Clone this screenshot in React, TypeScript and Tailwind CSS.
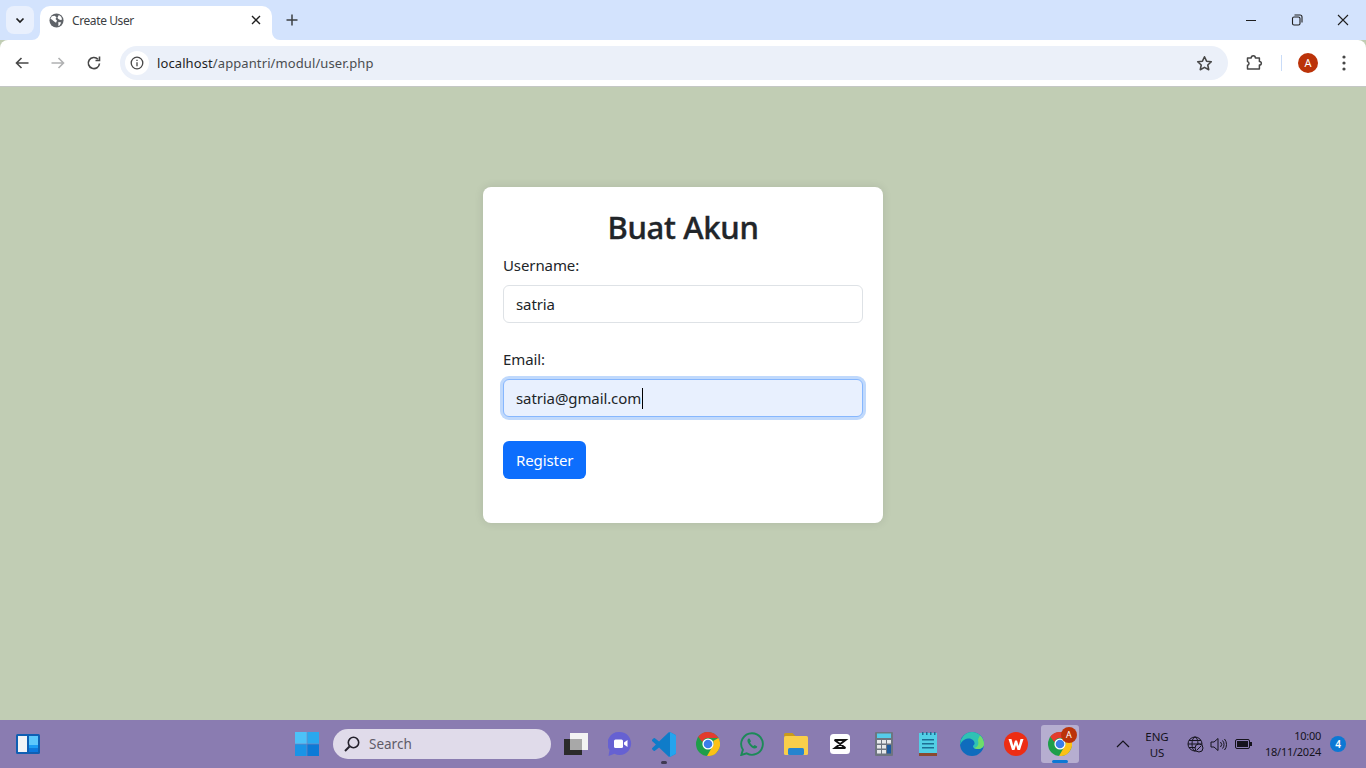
import React from "react";

const font = { fontFamily: '"Noto Sans", "Open Sans", sans-serif' };

function ChromeLogo({ size = 24 }: { size?: number }) {
  return (
    <svg width={size} height={size} viewBox="0 0 24 24">
      <circle cx="12" cy="12" r="12" fill="#1e9e4a" />
      <path d="M12 0a12 12 0 0 1 10.400 6H12a6 6 0 0 0-5.600 3.900L2.200 4.700A12 12 0 0 1 12 0z" fill="#e33b2e" />
      <path d="M22.400 6A12 12 0 0 1 11 24l5-8.700A6 6 0 0 0 17.200 9z" fill="#fbc116" />
      <circle cx="12" cy="12" r="5.600" fill="#fff" />
      <circle cx="12" cy="12" r="4.300" fill="#3a7de8" />
    </svg>
  );
}

function TaskItem({ children, dot }: { children: React.ReactNode; dot?: boolean }) {
  return (
    <div className="relative flex h-[38px] w-11 items-center justify-center">
      {children}
      {dot && <div className="absolute bottom-[-1px] left-[19px] h-[3px] w-[6px] rounded-full bg-[#3f3a52]" />}
    </div>
  );
}

export default function App() {
  return (
    <div className="flex h-screen w-full flex-col overflow-hidden bg-[#c1cdb4]" style={font}>
      {/* Tab strip */}
      <div className="flex h-10 shrink-0 items-end bg-[#d3e3fd]">
        <div className="mb-[6px] ml-[6px] flex h-7 w-7 items-center justify-center rounded-lg bg-[#e9f0fd]">
          <svg width="12" height="12" viewBox="0 0 12 12" fill="none" stroke="#1f1f1f" strokeWidth="1.700">
            <path d="M2.500 4.500 6 8l3.500-3.500" />
          </svg>
        </div>
        <div className="relative ml-[6px] flex h-[34px] w-[232px] items-center rounded-t-[10px] bg-white pb-[6px] pl-[9px] pr-[10px]">
          <svg className="absolute bottom-0 left-[-8px]" width="8" height="8" viewBox="0 0 8 8"><path d="M8 0v8H0a8 8 0 0 0 8-8z" fill="#fff" /></svg>
          <svg className="absolute bottom-0 right-[-8px]" width="8" height="8" viewBox="0 0 8 8"><path d="M0 0v8h8a8 8 0 0 1-8-8z" fill="#fff" /></svg>
          <svg width="15" height="15" viewBox="0 0 16 16">
            <circle cx="8" cy="8" r="7.500" fill="#5f6368" />
            <path d="M3 3.500 6 3l2 1.500L7 6.500 8.500 8l-1 2.500L5.500 9 3 7 1.500 6zM10.500 2l2.500 2 1 3-2 .5-2-1-1-1.500zM10 9.500l3 .5-1.500 3L10 14z" fill="#fff" />
          </svg>
          <span className="ml-[8px] flex-1 pt-[2px] text-[12px] leading-none tracking-[-0.4px] text-[#3c4043]">Create User</span>
          <svg width="10" height="10" viewBox="0 0 10 10" stroke="#1f1f1f" strokeWidth="1.400" className="mr-[1px]">
            <path d="M1 1l8 8M9 1 1 9" />
          </svg>
        </div>
        <div className="mb-[14px] ml-[14px] flex h-3 w-3 items-center justify-center">
          <svg width="12" height="12" viewBox="0 0 12 12" stroke="#3c4043" strokeWidth="1.500"><path d="M6 .5v11M.5 6h11" /></svg>
        </div>
        <div className="mb-[14px] ml-auto flex items-center">
          <div className="flex w-[46px] justify-center">
            <svg width="12" height="12" viewBox="0 0 12 12" stroke="#1f1f1f"><path d="M1 6.500h10" /></svg>
          </div>
          <div className="flex w-[46px] justify-center">
            <svg width="12" height="12" viewBox="0 0 12 12" fill="none" stroke="#1f1f1f" strokeWidth="1.100">
              <rect x="1.500" y="3" width="7.500" height="8" rx="1.500" />
              <path d="M3.500 1h5.500a2 2 0 0 1 2 2v5.500" />
            </svg>
          </div>
          <div className="flex w-[46px] justify-center">
            <svg width="12" height="12" viewBox="0 0 12 12" stroke="#1f1f1f" strokeWidth="1.100"><path d="M1 1l10 10M11 1 1 11" /></svg>
          </div>
        </div>
      </div>

      {/* Toolbar */}
      <div className="flex h-[47px] shrink-0 items-center rounded-t-lg border-b border-[#c4c7c5] bg-white">
        <div className="ml-[14px] flex items-center gap-[20px]">
          <svg width="16" height="16" viewBox="0 0 16 16" fill="none" stroke="#474747" strokeWidth="1.600"><path d="M14.500 8H2.500M7.500 3l-5 5 5 5" /></svg>
          <svg width="16" height="16" viewBox="0 0 16 16" fill="none" stroke="#b0b1b2" strokeWidth="1.600"><path d="M1.500 8h12M8.500 3l5 5-5 5" /></svg>
          <svg width="16" height="16" viewBox="0 0 16 16" fill="none" stroke="#474747" strokeWidth="1.600">
            <path d="M13.500 8.500A5.600 5.600 0 1 1 12 4.200" />
            <path d="M13.500 1.500v4h-4" />
          </svg>
        </div>
        <div className="ml-[18px] flex h-[34px] flex-1 items-center rounded-full bg-[#ebf0f9]">
          <div className="ml-[5px] flex h-6 w-6 items-center justify-center rounded-full bg-white">
            <svg width="14" height="14" viewBox="0 0 14 14" fill="none" stroke="#474747" strokeWidth="1.300">
              <circle cx="7" cy="7" r="5.800" />
              <path d="M7 6.200v4" />
              <path d="M7 3.700v1.300" />
            </svg>
          </div>
          <span className="ml-[8px] flex-1 pt-px text-[13px] tracking-[0.1px] text-[#4a4d50]">
            <span className="text-[#1f1f1f]">localhost</span>/appantri/modul/user.php
          </span>
          <svg className="mr-[15px]" width="17" height="17" viewBox="0 0 24 24" fill="none" stroke="#474747" strokeWidth="2.200">
            <path d="M12 2.500l2.900 6.200 6.700.8-5 4.600 1.400 6.700L12 17.400l-6 3.400 1.400-6.700-5-4.600 6.700-.8z" strokeLinejoin="round" />
          </svg>
        </div>
        <svg className="ml-[18px]" width="18" height="18" viewBox="0 0 18 18" fill="none" stroke="#474747" strokeWidth="1.500">
          <path d="M1.500 4h3.700c0-3 4.200-3 4.200 0h4v3.500c2.600 0 2.600 3.600 0 3.600V15H1.500v-3.700c2-.5 2-3.300 0-3.800z" strokeLinejoin="round" />
        </svg>
        <div className="ml-[17px] h-4 w-px bg-[#c9dcf8]" />
        <div className="ml-[16px] flex h-5 w-5 items-center justify-center rounded-full bg-[#bb3309] text-[11px] text-white">A</div>
        <svg className="ml-[24px] mr-[20px]" width="4" height="16" viewBox="0 0 4 16" fill="#474747">
          <circle cx="2" cy="2" r="1.600" /><circle cx="2" cy="8" r="1.600" /><circle cx="2" cy="14" r="1.600" />
        </svg>
      </div>

      {/* Page */}
      <main className="flex-1">
        <div className="mx-auto mt-[100px] h-[336px] w-[400px] rounded-lg bg-white p-5 shadow-[0_0_10px_rgba(0,0,0,0.1)]">
          <h2 className="mb-[7px] mt-px text-center text-[31px] font-medium leading-[38px] tracking-[-0.3px] text-[#212529] [-webkit-text-stroke:0.4px_#212529]">Buat Akun</h2>
          <div className="mb-4">
            <label className="mb-2 block text-[15px] leading-6 tracking-[-0.1px] text-[#212529]">Username:</label>
            <input
              readOnly
              value="satria"
              className="block h-[38px] w-full rounded-md border border-[#dee2e6] bg-white px-3 text-[15px] tracking-[-0.1px] text-[#212529] outline-none"
              style={font}
            />
          </div>
          <div className="mt-6 mb-6">
            <label className="mb-2 block text-[15px] leading-6 tracking-[-0.1px] text-[#212529]">Email:</label>
            <div className="flex h-[38px] w-full items-center rounded-md border border-[#86b7fe] bg-[#e8f0fe] px-3 text-[15px] tracking-[-0.1px] text-[#212529] shadow-[0_0_0_3px_#c0d9fc]">
              satria@gmail.com
              <span className="ml-[1px] h-[21px] w-px bg-black" />
            </div>
          </div>
          <button className="h-[38px] rounded-md bg-[#0d6efd] px-[13px] text-[15px] tracking-[-0.1px] text-white" style={font}>Register</button>
        </div>
      </main>

      {/* Taskbar */}
      <div className="flex h-12 shrink-0 items-center bg-[#8a7cb1]">
        <div className="w-[285px] pl-4">
          <svg width="24" height="20" viewBox="0 0 24 20">
            <rect width="24" height="20" rx="1.500" fill="#0f5fb3" />
            <rect x="2" y="2" width="9" height="16" fill="#f3f4f6" />
            <rect x="13" y="2" width="9" height="9" fill="#5cc8fc" />
            <rect x="13" y="11" width="9" height="3.500" fill="#1a9cf4" />
            <rect x="13" y="14.500" width="9" height="3.500" fill="#0a78e0" />
          </svg>
        </div>
        <TaskItem>
          <svg width="24" height="24" viewBox="0 0 24 24">
            <rect width="11.700" height="11.700" fill="#4cc2f8" />
            <rect x="12.300" width="11.700" height="11.700" fill="#29a8ee" />
            <rect y="12.300" width="11.700" height="11.700" fill="#1a94e6" />
            <rect x="12.300" y="12.300" width="11.700" height="11.700" fill="#0c7ad6" />
          </svg>
        </TaskItem>
        <div className="ml-[4px] flex h-[30px] w-[218px] items-center rounded-full bg-[#e0dbea] pl-[10px]">
          <svg width="18" height="18" viewBox="0 0 18 18" fill="none" stroke="#24212c" strokeWidth="1.600">
            <circle cx="10.500" cy="7.500" r="5.200" />
            <path d="M6.500 11.500 2 16" strokeWidth="2" />
          </svg>
          <span className="ml-[8px] text-[13.500px] text-[#5f5b68]">Search</span>
        </div>
        <div className="ml-[3px] flex items-center">
          <TaskItem>
            <svg width="24" height="22" viewBox="0 0 24 22">
              <rect x="6" y="0" width="18" height="17" fill="#f3f3f3" />
              <rect y="6" width="18" height="16" fill="#2b2b2b" />
              <rect x="6" y="6" width="12" height="11" fill="#a8a8a8" />
            </svg>
          </TaskItem>
          <TaskItem>
            <svg width="24" height="26" viewBox="0 0 24 26">
              <path d="M11.500 1a11.500 11.500 0 1 1-5 21.800L.5 25l1-6A11.500 11.500 0 0 1 11.500 1z" fill="#6661d2" />
              <rect x="6" y="8.500" width="9" height="8.500" rx="1.500" fill="#fff" />
              <path d="M16 11.500l3.500-2.500v7L16 13.500z" fill="#fff" />
            </svg>
          </TaskItem>
          <TaskItem dot>
            <svg width="24" height="25" viewBox="0 0 100 100" preserveAspectRatio="none">
              <path d="M70.900 99.300a6.200 6.200 0 0 0 5-.2l20.600-9.900a6.200 6.200 0 0 0 3.500-5.600V16.400a6.200 6.200 0 0 0-3.500-5.600L75.900.9a6.200 6.200 0 0 0-7.100 1.200L29.400 38.100 12.200 25a4.200 4.200 0 0 0-5.300.2L1.400 30.300a4.200 4.200 0 0 0 0 6.200L16.300 50 1.400 63.500a4.200 4.200 0 0 0 0 6.200l5.500 5a4.200 4.200 0 0 0 5.300.2l17.200-13.100 39.400 36a6.200 6.200 0 0 0 2.100 1.500zM75 27.300 45.100 50 75 72.700z" fill="#0f7cc9" />
              <path d="M96.500 10.800 75.900.9a6.200 6.200 0 0 0-7.100 1.200 3.600 3.600 0 0 1 6.200 2.600v90.600a3.600 3.600 0 0 1-6.200 2.600 6.200 6.200 0 0 0 7.100 1.200l20.600-9.900a6.200 6.200 0 0 0 3.500-5.600V16.400a6.200 6.200 0 0 0-3.500-5.600z" fill="#24a4ee" />
            </svg>
          </TaskItem>
          <TaskItem><ChromeLogo /></TaskItem>
          <TaskItem>
            <svg width="24" height="24" viewBox="0 0 24 24" fill="none">
              <path d="M12 1.200a10.800 10.800 0 1 1-5.300 20.200L1.300 23l1.600-5.200A10.800 10.800 0 0 1 12 1.200z" stroke="#1c8a58" strokeWidth="1.900" />
              <path d="M8.500 6.500c-1.500 1-1.500 3 .2 5.500s4 4.500 6 4.500c1.500 0 2.500-1 2.500-2l-2.500-1.500-1.200 1c-1.500-.6-2.800-2-3.500-3.500l1-1.200L9.500 6.500z" fill="#1c8a58" />
            </svg>
          </TaskItem>
          <TaskItem>
            <svg width="24" height="24" viewBox="0 0 24 24">
              <path d="M0 2.500A1.500 1.500 0 0 1 1.500 1h7l3 3H0z" fill="#c99a1c" />
              <rect y="4" width="24" height="19" rx="1.500" fill="#f9ce4a" />
              <rect x="4" y="16" width="16" height="7" rx="1.500" fill="#2684cf" />
            </svg>
          </TaskItem>
          <TaskItem>
            <svg width="20" height="20" viewBox="0 0 20 20">
              <rect width="20" height="20" rx="3.500" fill="#fff" />
              <path d="M4.500 6h11L5 14h10.500M15.500 6 5 14M4.500 6l11 8" fill="none" stroke="#111" strokeWidth="2" />
            </svg>
          </TaskItem>
          <TaskItem>
            <svg width="18" height="24" viewBox="0 0 18 24">
              <rect width="18" height="24" rx="1" fill="#6e7580" />
              <rect x="2" y="1.500" width="14" height="4.500" fill="#55cdea" />
              <g fill="#e6e8ea">
                <rect x="2" y="8" width="4" height="3.500" /><rect x="7" y="8" width="4" height="3.500" />
                <rect x="2" y="13" width="4" height="3.500" /><rect x="7" y="13" width="4" height="3.500" />
                <rect x="2" y="18" width="4" height="3.500" /><rect x="7" y="18" width="4" height="3.500" />
                <rect x="12" y="8" width="4" height="3.500" />
              </g>
              <rect x="12" y="13" width="4" height="8.500" fill="#1d5b9e" />
            </svg>
          </TaskItem>
          <TaskItem>
            <svg width="18" height="24" viewBox="0 0 18 24">
              <rect y="1" width="18" height="20" fill="#52cfe6" />
              <rect y="21" width="18" height="3" fill="#8a4a30" />
              <g fill="#1d6e94">
                <rect x="3" y="0" width="1.500" height="3" /><rect x="7" y="0" width="1.500" height="3" /><rect x="11" y="0" width="1.500" height="3" /><rect x="15" y="0" width="1.500" height="3" />
                <rect x="3" y="7" width="12" height="1.500" /><rect x="3" y="11" width="12" height="1.500" /><rect x="3" y="15" width="12" height="1.500" />
              </g>
            </svg>
          </TaskItem>
          <TaskItem>
            <svg width="24" height="24" viewBox="0 0 24 24">
              <circle cx="12" cy="12" r="12" fill="#0f6cbd" />
              <path d="M12 0a12 12 0 0 1 12 12c0 3.500-3 5-6 5s-5-1-5-2.500c0-1 1-1.500 1.500-2.500C15 9 12 6 8 6.500 4 7 1 10 .2 13A12 12 0 0 1 12 0z" fill="#2fc2b4" />
              <path d="M20 3.500A12 12 0 0 1 24 12c0 3.500-3 5-6 5-1.500 0-3-.3-4-1 4-1 5-4 4-7 0-2 1-4 2-5.500z" fill="#6fdc6a" />
            </svg>
          </TaskItem>
          <TaskItem>
            <svg width="24" height="24" viewBox="0 0 24 24">
              <circle cx="12" cy="12" r="12" fill="#ed2d14" />
              <path d="M4.500 7h3l1.800 7L11 8.500h2L14.700 14l1.800-7h3L16 18h-2.500L12 13l-1.500 5H8z" fill="#fff" />
            </svg>
          </TaskItem>
          <div className="relative ml-[3px] flex h-[38px] w-[38px] items-center justify-center rounded-[3px] bg-[#b6aed0]">
            <ChromeLogo />
            <div className="absolute right-[2px] top-[2px] flex h-4 w-4 items-center justify-center rounded-full bg-[#bb3309] text-[9px] text-white">A</div>
            <div className="absolute bottom-0 left-[11px] h-[3px] w-4 rounded-full bg-[#0c78d4]" />
          </div>
        </div>
        <div className="ml-[37px] flex items-center">
          <svg width="14" height="8" viewBox="0 0 14 8" fill="none" stroke="#15131c" strokeWidth="1.200"><path d="M1 7l6-6 6 6" /></svg>
          <div className="ml-[10px] w-[34px] pt-px text-center text-[11.500px] leading-[16px] text-[#15131c]">ENG<br />US</div>
          <svg className="ml-[13px]" width="17" height="17" viewBox="0 0 17 17" fill="none" stroke="#15131c" strokeWidth="1">
            <circle cx="8" cy="8" r="7" /><ellipse cx="8" cy="8" rx="3" ry="7" /><path d="M1 8h14M2 4.500h12M2 11.500h12" />
            <circle cx="12" cy="12" r="4" fill="#8a7cb1" /><path d="M10 14l4-4" />
          </svg>
          <svg className="ml-[6px]" width="17" height="15" viewBox="0 0 17 15" fill="none" stroke="#15131c" strokeWidth="1">
            <path d="M1 5h3l4-3.500v12L4 10H1zM10.500 5a3.500 3.500 0 0 1 0 5M12.500 3.500a6 6 0 0 1 0 8M14.500 2a8.500 8.500 0 0 1 0 11" />
          </svg>
          <svg className="ml-[8px]" width="17" height="10" viewBox="0 0 17 10">
            <rect x=".5" y=".5" width="14" height="9" rx="1.500" fill="none" stroke="#15131c" />
            <rect x="2" y="2" width="11" height="6" fill="#15131c" />
            <rect x="15" y="3" width="2" height="4" fill="#15131c" />
          </svg>
          <div className="ml-[11px] w-[58px] text-right text-[11px] leading-[16px] tracking-[-0.25px] text-[#15131c]">10:00<br />18/11/2024</div>
          <div className="ml-[9px] flex h-4 w-4 items-center justify-center rounded-full bg-[#0c78d4] text-[10px] font-semibold text-white">4</div>
        </div>
      </div>
    </div>
  );
}
